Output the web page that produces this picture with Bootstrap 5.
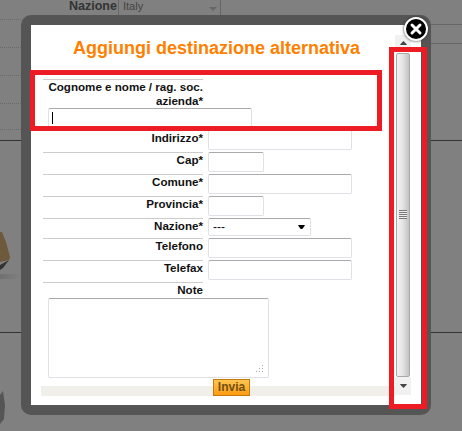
<!doctype html>
<html lang="it">

<head>
    <meta charset="utf-8">
    <meta name="viewport" content="width=device-width, initial-scale=1">
    <link href="https://cdn.jsdelivr.net/npm/bootstrap@5.3.3/dist/css/bootstrap.min.css" rel="stylesheet">
    <title>Aggiungi destinazione alternativa</title>
    <style>
        body { background: #808080; width: 462px; height: 431px; overflow: hidden; font-family: "Liberation Sans", Arial, sans-serif; font-size: 12px; color: #111; }
        /* pagina sotto il popup */
        .pagina { width: 462px; height: 431px; }
        .lato-sx { width: 21px; flex: none; }
        .lato-dx { width: 31px; flex: none; }
        .centro { width: 410px; flex: none; }
        .punti { border-bottom: 1px dotted #696969; box-sizing: border-box; }
        .filo { border-bottom: 1px solid #333; box-sizing: border-box; }
        .filo-chiaro { border-bottom: 1px solid #666; box-sizing: border-box; }
        .testata { height: 15px; line-height: 12px; padding-left: 48px; color: #333; }
        .testata b { width: 49px; font-size: 12.5px; }
        .cella-italy { width: 103px; border-left: 1px solid #666; border-right: 1px solid #666; padding-left: 4px; font-size: 11px; color: #444; }
        .freccia-su-sfondo { width: 0; height: 0; border: 4px solid transparent; border-top-color: #666; border-bottom: 0; margin: 7px 3px 0 auto; }
        /* popup */
        .popup { width: 410px; height: 400px; border: 10px solid #555; border-radius: 10px; background-clip: padding-box; background-color: #fff; padding: 10px; box-sizing: border-box; position: relative; }
        .popup-interno { width: 100%; height: 100%; }
        .contenuto { width: 354px; flex: none; }
        .titolo { height: 44px; margin: 0; padding: 3px 3px 0 0; font-size: 18px; line-height: 20px; font-weight: 700; color: #ff7f00; text-align: center; font-family: inherit; }
        .riga { height: 22px; margin-left: 2px; }
        .riga-bassa { height: 20px; }
        .etichetta { width: 160px; flex: none; border-top: 1px solid #ccc; font-size: 11.6px; font-weight: 700; text-align: right; line-height: 13px; }
        .riga-alta { height: 51px; margin-left: 2px; }
        .riga-alta .etichetta { padding: 0; line-height: 14px; height: 29px; white-space: nowrap; }
        .riga-nota { height: 16px; margin-left: 2px; }
        .campo { height: 20px; padding: 0 3px; min-height: 0; font-size: 12px; border: 1px solid #e0e0e6; border-top-color: #aaa; border-radius: 2px; margin-left: 5px; box-shadow: none; }
        .campo-lungo { width: 144px; flex: none; }
        .campo-corto { width: 56px; flex: none; }
        .campo-nome { width: 204px; margin-left: 5px; height: 20px; position: relative; }
        .campo-nome .campo { width: 100%; margin: 0; }
        .cursore { position: absolute; left: 4px; top: 4px; width: 1px; height: 12px; background: #000; }
        .campo-select { width: 103px; height: 18px; flex: none; color: #111; padding: 0 3px 0 4px; line-height: 16px; background-size: 7px 4px; background-position: right 5px center; background-image: url("data:image/svg+xml,%3csvg xmlns='http://www.w3.org/2000/svg' viewBox='0 0 8 5'%3e%3cpath d='M0 0h8v1l-3 4h-2l-3-4z' fill='%23000'/%3e%3c/svg%3e"); }
        .area-note { width: 221px; margin-left: 7px; height: 80px; position: relative; }
        .area-note textarea { width: 100%; height: 80px; margin: 0; resize: none; }
        .presa { position: absolute; right: 5px; bottom: 4px; width: 9px; height: 9px; }
        .piede { height: 17px; margin-top: 1px; background: linear-gradient(transparent 7px, #f1efea 7px); padding-left: 172px; }
        .bottone-invia { width: 37px; height: 17px; padding: 0; border: 1px solid #c47a0c; border-radius: 0; background: linear-gradient(#ffc552, #ff9c12); color: #70500e; font-size: 12px; font-weight: 700; line-height: 15px; }
        /* barra di scorrimento */
        .barra { width: 16px; flex: none; }
        .barra-tasto { height: 18px; background: #f1f1f1; }
        .barra-tasto-su { height: 16px; margin-bottom: 2px; }
        .barra-cursore { flex: 1; margin: 0 1px; border: 1px solid #aaa; border-radius: 2px; background: linear-gradient(90deg, #f2f2f2, #e6e6e6 45%, #c2c2c2); }
        .barra-righe { width: 8px; height: 9px; margin-bottom: 2px; background: repeating-linear-gradient(#777 0 1px, #eee 1px 2px); }
        /* evidenziazioni rosse e chiusura */
        .rosso { position: absolute; border: 5px solid #ed1c24; }
        .rosso-nome { left: -1px; top: 45px; width: 352px; height: 61px; }
        .rosso-barra { left: 358px; top: 22px; width: 38px; height: 362px; }
        .chiudi { position: absolute; left: 373px; top: -8px; width: 24px; height: 24px; border-radius: 50%; background: #000; border: 2px solid #fff; box-shadow: 0 0 3px #333; }
    </style>
</head>

<body>
    <div class="pagina d-flex">
        <div class="lato-sx">
            <div class="punti" style="height:20px"></div>
            <div class="punti" style="height:28px"></div>
            <div class="punti" style="height:28px"></div>
            <div class="punti" style="height:28px"></div>
            <div class="punti" style="height:26px"></div>
            <div class="filo" style="height:11px"></div>
            <svg class="d-block" width="21" height="192" viewBox="0 0 21 192">
                <defs>
                    <linearGradient id="ombra" x1="0" x2="1"><stop offset="0" stop-color="#6c6c6c"/><stop offset="1" stop-color="#808080"/></linearGradient>
                </defs>
                <rect x="0" y="133" width="21" height="5" fill="url(#ombra)" opacity=".8"/>
                <path d="M0 91h2l4 10 4 15-1 3-9 2z" fill="#6d5a3c"/>
                <path d="M0 124l9-5-6 8-3 2z" fill="#333"/>
                <rect x="0" y="191" width="21" height="1" fill="#333"/>
            </svg>
            <svg class="d-block" width="21" height="98" viewBox="0 0 21 98">
                <path d="M0 62l3-4 2 14-1 14-4 5z" fill="#555"/>
            </svg>
        </div>
        <div class="centro">
            <div class="testata d-flex">
                <b>Nazione</b>
                <div class="cella-italy d-flex">
                    <span>Italy</span>
                    <span class="freccia-su-sfondo"></span>
                </div>
            </div>
            <div class="popup">
                <div class="popup-interno d-flex">
                    <div class="contenuto">
                        <h1 class="titolo">Aggiungi destinazione alternativa</h1>
                        <form>
                            <div class="riga-alta">
                                <div class="etichetta">Cognome e nome / rag. soc.<br>azienda*</div>
                                <div class="campo-nome">
                                    <input type="text" class="form-control campo">
                                    <span class="cursore"></span>
                                </div>
                            </div>
                            <div class="riga d-flex">
                                <div class="etichetta">Indirizzo*</div>
                                <input type="text" class="form-control campo campo-lungo">
                            </div>
                            <div class="riga d-flex">
                                <div class="etichetta">Cap*</div>
                                <input type="text" class="form-control campo campo-corto">
                            </div>
                            <div class="riga d-flex">
                                <div class="etichetta">Comune*</div>
                                <input type="text" class="form-control campo campo-lungo">
                            </div>
                            <div class="riga d-flex">
                                <div class="etichetta">Provincia*</div>
                                <input type="text" class="form-control campo campo-corto">
                            </div>
                            <div class="riga riga-bassa d-flex">
                                <div class="etichetta">Nazione*</div>
                                <select class="form-select campo campo-select">
                                    <option>---</option>
                                </select>
                            </div>
                            <div class="riga d-flex">
                                <div class="etichetta">Telefono</div>
                                <input type="text" class="form-control campo campo-lungo">
                            </div>
                            <div class="riga d-flex">
                                <div class="etichetta">Telefax</div>
                                <input type="text" class="form-control campo campo-lungo">
                            </div>
                            <div class="riga-nota d-flex">
                                <div class="etichetta">Note</div>
                            </div>
                            <div class="area-note">
                                <textarea class="form-control campo"></textarea>
                                <svg class="presa" viewBox="0 0 9 9">
                                    <path d="M7 0h1v1H7zM7 3h1v1H7zM4 3h1v1H4zM7 6h1v1H7zM4 6h1v1H4zM1 6h1v1H1z" fill="#aaa"/>
                                </svg>
                            </div>
                            <div class="piede d-flex">
                                <button type="button" class="btn bottone-invia">Invia</button>
                            </div>
                        </form>
                    </div>
                    <div class="barra d-flex flex-column">
                        <div class="barra-tasto barra-tasto-su d-flex align-items-center justify-content-center">
                            <svg width="7" height="4" viewBox="0 0 8 5"><path d="M4 0l4 4v1H0V4z" fill="#444"/></svg>
                        </div>
                        <div class="barra-cursore d-flex align-items-center justify-content-center">
                            <div class="barra-righe"></div>
                        </div>
                        <div class="barra-tasto d-flex align-items-center justify-content-center">
                            <svg width="7" height="4" viewBox="0 0 8 5"><path d="M0 0h8v1L4 5 0 1z" fill="#444"/></svg>
                        </div>
                    </div>
                </div>
                <div class="rosso rosso-nome"></div>
                <div class="rosso rosso-barra"></div>
                <div class="chiudi d-flex align-items-center justify-content-center">
                    <svg width="14" height="14" viewBox="0 0 14 14"><path d="M3 3l8 8M11 3l-8 8" stroke="#fff" stroke-width="3" stroke-linecap="round"/></svg>
                </div>
            </div>
        </div>
        <div class="lato-dx">
            <div class="filo-chiaro" style="height:25px"></div>
            <div class="filo-chiaro" style="height:19px"></div>
            <div class="filo" style="height:97px"></div>
            <div class="filo" style="height:192px"></div>
        </div>
    </div>
    <script src="https://cdn.jsdelivr.net/npm/bootstrap@5.3.3/dist/js/bootstrap.bundle.min.js"></script>
</body>

</html>
